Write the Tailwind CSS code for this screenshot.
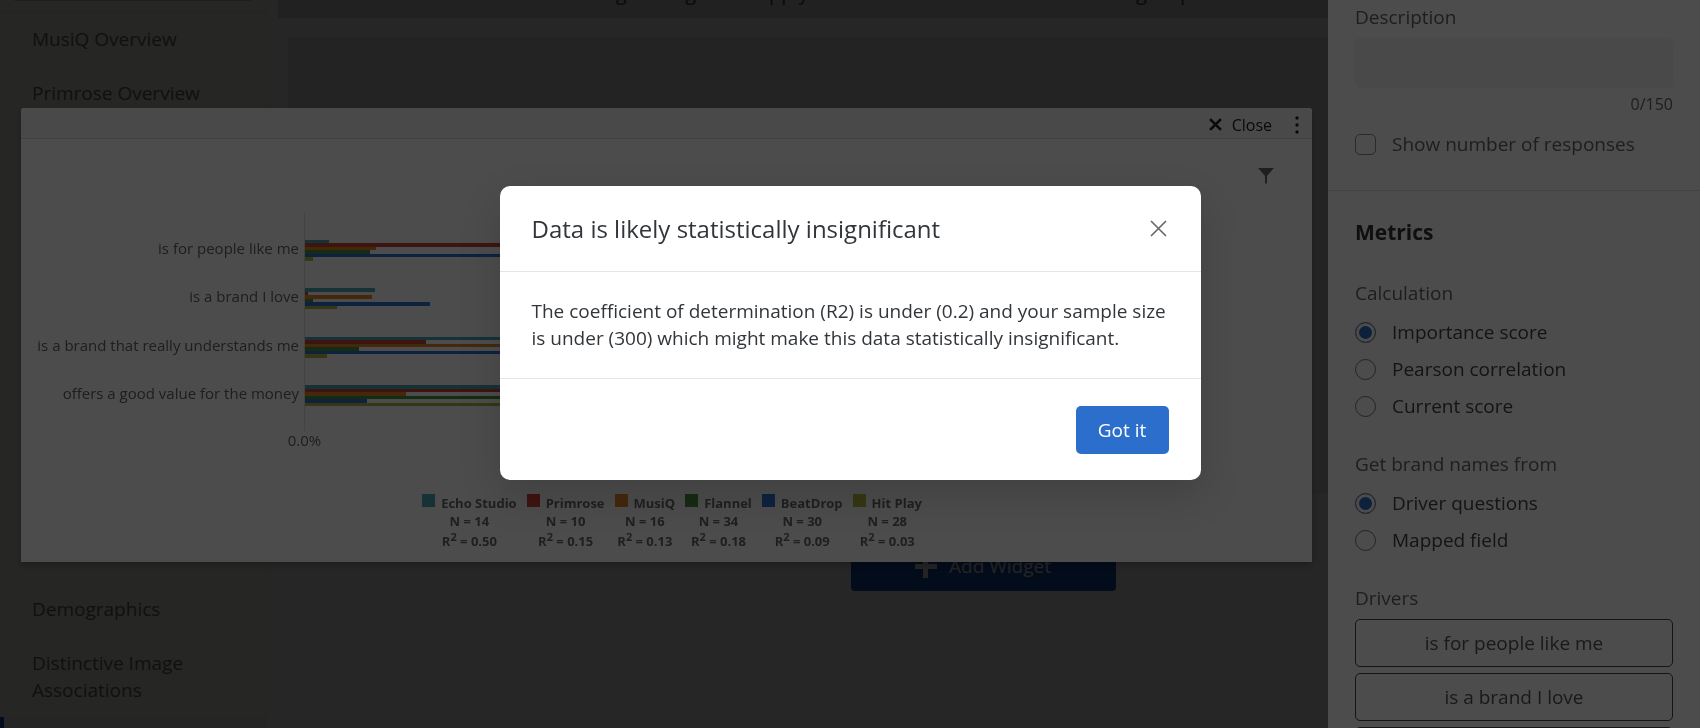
<!DOCTYPE html>
<html lang="en">
<head>
  <meta charset="UTF-8" />
  <meta name="viewport" content="width=device-width, initial-scale=1.0"/>
  <title>Dashboard</title>
  <script src="https://cdn.jsdelivr.net/npm/@tailwindcss/browser@4"></script>
</head>
<body class="h-screen overflow-hidden bg-[#fdfdfd] font-['Open_Sans','Noto_Sans',sans-serif] text-[19px] leading-[27px] text-[#333]">

  <!-- Page -->
  <div class="flex h-full">
    <!-- Sidebar -->
    <nav class="w-[266px] shrink-0 h-full overflow-hidden border-r border-[#eee] bg-[#fffdf5] text-[#6e6e6e]">
      <div class="h-[12px] border-b border-[#e6e6e0] px-[14px]">
        <div class="h-px bg-[#c8d0e4]"></div>
      </div>
      <a href="#" class="block pt-[14px] pb-[13px] pl-8 pr-10">MusiQ Overview</a>
      <a href="#" class="block pt-[14px] pb-[13px] pl-8 pr-10">Primrose Overview</a>
      <div class="h-[462px]"></div>
      <a href="#" class="block pt-[14px] pb-[13px] pl-8 pr-10">Demographics</a>
      <a href="#" class="block pt-[14px] pb-[13px] pl-8 pr-10">Distinctive Image Associations</a>
      <div class="h-[54px] border-l-4 border-[#0b4fc4] bg-[#f4f4f6]"></div>
    </nav>

    <!-- Main -->
    <main class="flex-1 overflow-hidden">
      <div class="mx-3 flex h-[18px] items-end justify-center gap-4 bg-[#dedede] pb-3 pl-4 text-xl leading-[27px] whitespace-nowrap text-[#444]">
        <span>Now Editing: Changes will apply to all viewers once this dashboard gets published.</span>
        <a href="#" class="text-[#3b3bb0]">Show original here</a>
      </div>
      <div class="mx-[22px] mt-5 h-[456px] bg-[#ececec]"></div>
      <div class="mt-11 flex justify-center">
        <button class="flex h-[53px] w-[265px] items-center justify-center gap-3 rounded-[4px] bg-[#1a50b4] pt-1 text-[#f0f0f0]">
          <svg class="size-[22px]" viewBox="0 0 22 22" fill="currentColor"><path d="M8 0h5v8h9v5h-9v9H8v-9H0V8h8z"/></svg>
          Add Widget
        </button>
      </div>
    </main>
  </div>

  <!-- Page dim -->
  <div class="fixed inset-0 bg-black/50"></div>

  <!-- Widget preview -->
  <section class="fixed top-[108px] right-[388px] left-[21px] h-[454px] overflow-hidden rounded-t-[3px] bg-white shadow-[0_3px_7px_rgba(0,0,0,0.25)]">
    <header class="flex h-[31px] items-center justify-end border-b border-[#d8d8d8] bg-[#f3f3f3] pt-[3px] pr-[13px] text-base text-[#222]">
      <button class="flex items-center gap-[10px]">
        <svg class="size-[13px]" viewBox="0 0 12 12" stroke="currentColor" stroke-width="2.4"><path d="M1 1l10 10M11 1L1 11"/></svg>
        Close
      </button>
      <button class="ml-[23px]" aria-label="More">
        <svg class="h-[18px] w-1" viewBox="0 0 4 18" fill="currentColor"><circle cx="2" cy="2" r="1.7"/><circle cx="2" cy="9" r="1.7"/><circle cx="2" cy="16" r="1.7"/></svg>
      </button>
    </header>
    <div class="flex justify-end pt-[29px] pr-[38px]">
      <button class="text-[#6a6a6a]" aria-label="Filter">
        <svg class="block size-4" viewBox="0 0 16 16" fill="currentColor"><path d="M0 0h16L9 8v7.500H7V8z"/></svg>
      </button>
    </div>

    <!-- Chart -->
    <div class="mt-[29px] grid grid-cols-[283px_1fr] text-[15px] text-[#666]">
      <div class="pt-[11px] pr-[5px] pb-[13px]">
        <div class="flex h-[194px] flex-col" id="labels"></div>
      </div>
      <div class="border-l border-[#ddd] pt-[13px] pb-[11px]">
        <div class="flex h-[194px] flex-col" id="bars"></div>
      </div>
      <div class="col-start-1 w-[567px] text-center leading-[18px]">0.0%</div>
    </div>

    <!-- Legend -->
    <div class="mt-[45px] flex justify-center gap-[10px] pl-[11px] text-center text-[13px] leading-[18px] font-bold text-[#6a6a6a]" id="legend"></div>
  </section>

  <!-- Settings -->
  <aside class="fixed inset-y-0 right-0 w-[372px] overflow-hidden bg-white pt-1 text-[#666]">
    <div class="border-b border-[#ddd] px-[27px] pb-8">
      <label for="description" class="block">Description</label>
      <input id="description" type="text" class="mt-[7px] block h-[50px] w-full rounded-[5px] bg-[#f5f5f5] px-3" />
      <p class="mt-1 text-right text-base leading-6">0/150</p>
      <label class="mt-[15px] flex items-center gap-4">
        <input type="checkbox" class="size-[21px] appearance-none rounded-[5px] border border-[#888d96]" />
        Show number of responses
      </label>
    </div>
    <div class="px-[27px] pt-7">
      <h2 class="text-[21px] leading-[27px] font-bold text-[#333]">Metrics</h2>
      <fieldset class="mt-[34px]">
        <legend>Calculation</legend>
        <div class="mt-3 flex flex-col gap-[10px] text-[#444]">
          <label class="flex items-center gap-4"><input type="radio" name="calc" checked class="size-[21px] appearance-none rounded-full border border-[#777] bg-white checked:bg-[#2c6ecb] checked:shadow-[inset_0_0_0_3px_white]" />Importance score</label>
          <label class="flex items-center gap-4"><input type="radio" name="calc" class="size-[21px] appearance-none rounded-full border border-[#777] bg-white checked:bg-[#2c6ecb] checked:shadow-[inset_0_0_0_3px_white]" />Pearson correlation</label>
          <label class="flex items-center gap-4"><input type="radio" name="calc" class="size-[21px] appearance-none rounded-full border border-[#777] bg-white checked:bg-[#2c6ecb] checked:shadow-[inset_0_0_0_3px_white]" />Current score</label>
        </div>
      </fieldset>
      <fieldset class="mt-[31px]">
        <legend>Get brand names from</legend>
        <div class="mt-3 flex flex-col gap-[10px] text-[#444]">
          <label class="flex items-center gap-4"><input type="radio" name="brands" checked class="size-[21px] appearance-none rounded-full border border-[#777] bg-white checked:bg-[#2c6ecb] checked:shadow-[inset_0_0_0_3px_white]" />Driver questions</label>
          <label class="flex items-center gap-4"><input type="radio" name="brands" class="size-[21px] appearance-none rounded-full border border-[#777] bg-white checked:bg-[#2c6ecb] checked:shadow-[inset_0_0_0_3px_white]" />Mapped field</label>
        </div>
      </fieldset>
      <h3 class="mt-[31px]">Drivers</h3>
      <div class="mt-[7px] flex flex-col gap-[6px] text-[#555]">
        <button class="h-12 w-full rounded-[5px] border border-[#444]">is for people like me</button>
        <button class="h-12 w-full rounded-[5px] border border-[#444]">is a brand I love</button>
        <button class="h-12 w-full rounded-[5px] border border-[#444]" aria-label="More drivers"></button>
      </div>
    </div>
  </aside>

  <!-- Modal -->
  <div class="fixed inset-0 flex items-start justify-center bg-black/70 pt-[186px]">
    <div role="dialog" aria-labelledby="modal-title" class="w-[701px] rounded-[10px] bg-white shadow-[0_16px_40px_rgba(0,0,0,0.15)]">
      <div class="flex h-[86px] items-center justify-between border-b border-[#e3e5e8] pr-[34px] pl-8">
        <h1 id="modal-title" class="text-2xl text-[#32363a]">Data is likely statistically insignificant</h1>
        <button aria-label="Close">
          <svg class="block size-[17px]" viewBox="0 0 17 17" fill="none" stroke="#666" stroke-width="1.600"><path d="M1 1l15 15M16 1L1 16"/></svg>
        </button>
      </div>
      <p class="border-b border-[#e3e5e8] px-8 py-[26px] text-[#32363a]">The coefficient of determination (R2) is under (0.2) and your sample size is under (300) which might make this data statistically insignificant.</p>
      <div class="flex justify-end px-8 pt-[27px] pb-[26px]">
        <button class="h-12 w-[93px] rounded-[5px] bg-[#2c6ecb] text-white">Got it</button>
      </div>
    </div>
  </div>

  <script>
    const brands = [
      { name: 'Echo Studio', n: 14, r2: '0.50', color: '#4aa9ba' },
      { name: 'Primrose', n: 10, r2: '0.15', color: '#cf4338' },
      { name: 'MusiQ', n: 16, r2: '0.13', color: '#e0852a' },
      { name: 'Flannel', n: 34, r2: '0.18', color: '#4a9140' },
      { name: 'BeatDrop', n: 30, r2: '0.09', color: '#3074d4' },
      { name: 'Hit Play', n: 28, r2: '0.03', color: '#b3b83f' }
    ];

    const drivers = [
      { label: 'is for people like me', values: [24, 420, 71, 65, 510, 8] },
      { label: 'is a brand I love', values: [70, 3, 67, 8, 125, 32] },
      { label: 'is a brand that really understands me', values: [380, 121, 460, 54, 350, 22] },
      { label: 'offers a good value for the money', values: [540, 390, 101, 470, 62, 330] }
    ];

    document.getElementById('labels').innerHTML = drivers.map(d =>
      `<div class="flex flex-1 items-center justify-end whitespace-nowrap">${d.label}</div>`
    ).join('');

    document.getElementById('bars').innerHTML = drivers.map(d =>
      `<div class="flex flex-1 items-center"><div class="flex h-[21px] w-full flex-col">${d.values.map((v, i) =>
        `<div class="flex-1" style="width:${v}px;background:${brands[i].color}"></div>`).join('')}</div></div>`
    ).join('');

    document.getElementById('legend').innerHTML = brands.map(b =>
      `<div>
        <div class="flex gap-[6px]"><span class="size-[13px]" style="background:${b.color}"></span>${b.name}</div>
        <div>N = ${b.n}</div>
        <div class="mt-[2px]">R<sup class="text-[11px]">2</sup> = ${b.r2}</div>
      </div>`
    ).join('');
  </script>
</body>
</html>
